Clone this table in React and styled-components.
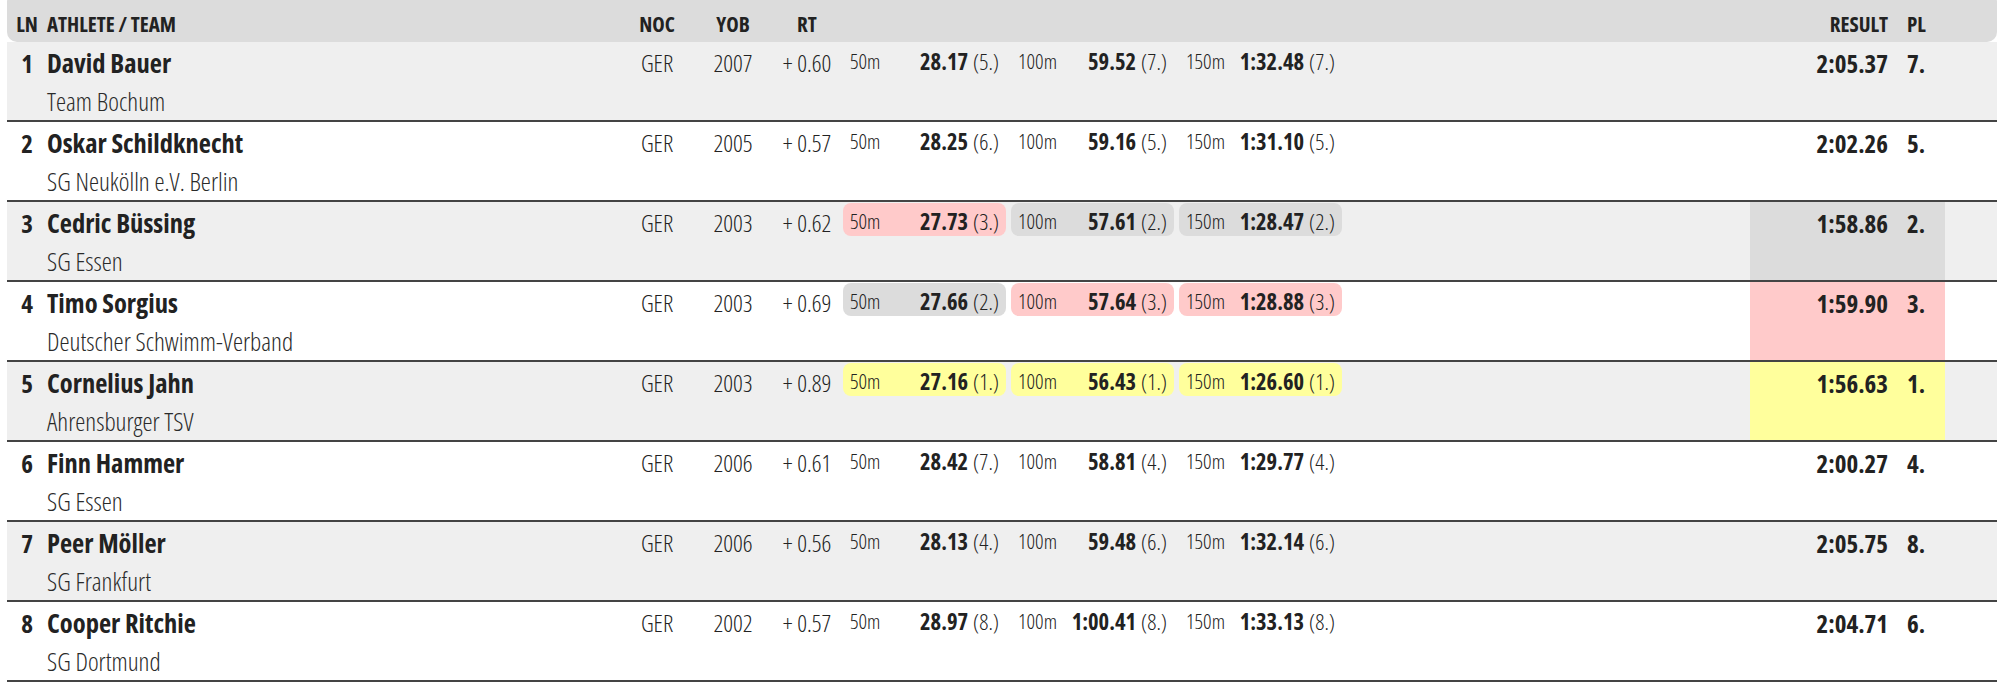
import React from "react";
import styled, { createGlobalStyle } from "styled-components";

const GlobalStyle = createGlobalStyle`
  html, body { margin: 0; padding: 0; background: #fff; }
  body {
    font-family: "Open Sans", "Noto Sans", sans-serif;
    font-stretch: 75%;
    color: #222;
    overflow: hidden;
  }
`;

const COLS = "40px 580px 60px 92px 56px 8px 499px 1fr 195px 52px";

const HIGHLIGHT = { 1: "#ffff9c", 2: "#dcdcdc", 3: "#ffcaca" };

const Table = styled.div`
  margin-left: 7px;
  width: 1990px;
`;

const HeaderRow = styled.div`
  display: grid;
  grid-template-columns: ${COLS};
  box-sizing: border-box;
  height: 50px;
  margin-top: -8px;
  padding-top: 14px;
  background: #dcdcdc;
  border-radius: 10px;
  font-weight: 700;
  font-size: 21px;
  line-height: 36px;
`;

const HeadCell = styled.div`
  text-align: ${(p) => p.$align || "left"};
  white-space: nowrap;
  padding-right: ${(p) => p.$pr || 0}px;
  padding-left: ${(p) => p.$pl || 0}px;
`;

const Row = styled.div`
  display: grid;
  grid-template-columns: ${COLS};
  min-height: 78px;
  background: ${(p) => (p.$shade ? "#efefef" : "#ffffff")};
  border-bottom: 2px solid #444;
  font-size: 24px;
  line-height: 32px;
`;

const Cell = styled.div`
  padding-top: 5px;
  text-align: ${(p) => p.$align || "left"};
  font-weight: ${(p) => (p.$bold ? 700 : 300)};
  font-size: ${(p) => p.$size || 24}px;
  white-space: nowrap;
`;

const Athlete = styled.div`
  padding-top: 5px;
  display: flex;
  flex-direction: column;
`;

const Name = styled.div`
  font-weight: 700;
  font-size: 26.5px;
  white-space: nowrap;
`;

const Team = styled.div`
  margin-top: 6px;
  font-weight: 300;
  font-size: 25.5px;
  color: #2a2a2a;
  white-space: nowrap;
`;

const Splits = styled.div`
  display: flex;
  gap: 5px;
  align-items: flex-start;
  padding-top: 1px;
`;

const Split = styled.div`
  box-sizing: border-box;
  width: 163px;
  height: 33px;
  padding: 6px 7px 0 7px;
  border-radius: 8px;
  background: ${(p) => p.$bg || "transparent"};
  display: flex;
  justify-content: space-between;
  align-items: flex-start;
  line-height: 26px;
`;

const Dist = styled.span`
  font-size: 21px;
  line-height: 24px;
  font-weight: 300;
`;

const Time = styled.span`
  white-space: nowrap;
  font-size: 22.5px;
`;

const TimeValue = styled.b`
  font-weight: 700;
`;

const Rank = styled.span`
  font-weight: 300;
  margin-left: 5px;
`;

const ResultBox = styled.div`
  display: grid;
  grid-template-columns: 145px 50px;
  background: ${(p) => p.$bg || "transparent"};
  font-weight: 700;
  font-size: ${(p) => p.$size || 25}px;
`;

const ResultTime = styled.div`
  padding-top: 5px;
  padding-right: 7px;
  text-align: right;
`;

const Place = styled.div`
  padding-top: 5px;
  padding-left: 12px;
`;

const rows = [
  { ln: 1, name: "David Bauer", team: "Team Bochum", yob: 2007, rt: "0.60", splits: [["28.17", 5], ["59.52", 7], ["1:32.48", 7]], result: "2:05.37", pl: 7 },
  { ln: 2, name: "Oskar Schildknecht", team: "SG Neukölln e.V. Berlin", yob: 2005, rt: "0.57", splits: [["28.25", 6], ["59.16", 5], ["1:31.10", 5]], result: "2:02.26", pl: 5 },
  { ln: 3, name: "Cedric Büssing", team: "SG Essen", yob: 2003, rt: "0.62", splits: [["27.73", 3], ["57.61", 2], ["1:28.47", 2]], result: "1:58.86", pl: 2 },
  { ln: 4, name: "Timo Sorgius", team: "Deutscher Schwimm-Verband", yob: 2003, rt: "0.69", splits: [["27.66", 2], ["57.64", 3], ["1:28.88", 3]], result: "1:59.90", pl: 3 },
  { ln: 5, name: "Cornelius Jahn", team: "Ahrensburger TSV", yob: 2003, rt: "0.89", splits: [["27.16", 1], ["56.43", 1], ["1:26.60", 1]], result: "1:56.63", pl: 1 },
  { ln: 6, name: "Finn Hammer", team: "SG Essen", yob: 2006, rt: "0.61", splits: [["28.42", 7], ["58.81", 4], ["1:29.77", 4]], result: "2:00.27", pl: 4 },
  { ln: 7, name: "Peer Möller", team: "SG Frankfurt", yob: 2006, rt: "0.56", splits: [["28.13", 4], ["59.48", 6], ["1:32.14", 6]], result: "2:05.75", pl: 8 },
  { ln: 8, name: "Cooper Ritchie", team: "SG Dortmund", yob: 2002, rt: "0.57", splits: [["28.97", 8], ["1:00.41", 8], ["1:33.13", 8]], result: "2:04.71", pl: 6 },
];

const DISTS = ["50m", "100m", "150m"];

export default function App() {
  return (
    <>
      <GlobalStyle />
      <Table>
        <HeaderRow>
          <HeadCell $align="center">LN</HeadCell>
          <HeadCell>ATHLETE / TEAM</HeadCell>
          <HeadCell $align="center">NOC</HeadCell>
          <HeadCell $align="center">YOB</HeadCell>
          <HeadCell $align="center">RT</HeadCell>
          <HeadCell />
          <HeadCell />
          <HeadCell />
          <ResultBox $size={21}>
            <HeadCell $align="right" $pr={7}>RESULT</HeadCell>
            <HeadCell $pl={12}>PL</HeadCell>
          </ResultBox>
          <HeadCell />
        </HeaderRow>
        {rows.map((r, i) => (
          <Row key={r.ln} $shade={i % 2 === 0}>
            <Cell $align="center" $bold $size={25}>{r.ln}</Cell>
            <Athlete>
              <Name>{r.name}</Name>
              <Team>{r.team}</Team>
            </Athlete>
            <Cell $align="center">GER</Cell>
            <Cell $align="center">{r.yob}</Cell>
            <Cell $align="center">+ {r.rt}</Cell>
            <div />
            <Splits>
              {r.splits.map(([t, rk], j) => (
                <Split key={j} $bg={HIGHLIGHT[rk]}>
                  <Dist>{DISTS[j]}</Dist>
                  <Time>
                    <TimeValue>{t}</TimeValue>
                    <Rank>({rk}.)</Rank>
                  </Time>
                </Split>
              ))}
            </Splits>
            <div />
            <ResultBox $bg={HIGHLIGHT[r.pl]}>
              <ResultTime>{r.result}</ResultTime>
              <Place>{r.pl}.</Place>
            </ResultBox>
            <div />
          </Row>
        ))}
      </Table>
    </>
  );
}
